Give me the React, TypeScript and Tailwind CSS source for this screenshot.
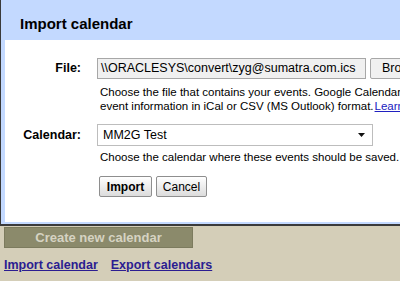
export default function App() {
  return (
    <div className="w-[400px] h-[281px] overflow-hidden bg-[#d4ceb8] font-['Liberation_Sans',Arial,sans-serif] text-black">
      {/* dialog, cut off at the right edge */}
      <div className="w-[430px] border-l border-b-2 border-[#3a3a3a]">
        <div className="border-l-4 border-b-2 border-[#c3d9ff]">
          <div className="h-[40px] bg-[#c3d9ff] pl-[15px] pt-[15px]">
            <h1 className="text-[15px] leading-[17px] font-bold">Import calendar</h1>
          </div>

          <div className="h-[182px] bg-white pt-[18px]">
            <div className="grid grid-cols-[76px_1fr] gap-x-[16px]">
              {/* File row */}
              <div className="h-[21px] flex items-center justify-end text-[12.5px] font-bold">File:</div>
              <div className="flex gap-[4px]">
                <div className="w-[269px] h-[21px] flex items-center pl-[3px] bg-[#f0f0f0] border border-[#a7a7a7] text-[12.5px] whitespace-nowrap overflow-hidden">
                  \\ORACLESYS\convert\zyg@sumatra.com.ics
                </div>
                <div className="w-[70px] h-[21px] flex items-center pl-[11px] bg-[#f0f0f0] border border-[#a7a7a7] rounded-[2px] text-[12.5px]">
                  Browse...
                </div>
              </div>

              <div />
              <div className="pl-[3px] pt-[6px] text-[11.5px] leading-[14px] whitespace-nowrap">
                <div>Choose the file that contains your events. Google Calendar can import</div>
                <div>
                  event information in iCal or CSV (MS Outlook) format.
                  <span className="ml-[1px] text-[#2020c0] underline">Learn more</span>
                </div>
              </div>

              {/* Calendar row */}
              <div className="mt-[11px] h-[22px] flex items-center justify-end text-[12.5px] font-bold">Calendar:</div>
              <div className="mt-[11px] w-[276px] h-[22px] flex items-center justify-between pl-[5px] pr-[7px] bg-white border border-[#bdbdbd] text-[12.5px]">
                <span>MM2G Test</span>
                <svg width="7" height="4" viewBox="0 0 7 4">
                  <path d="M0 0H7L3.5 4Z" fill="#111" />
                </svg>
              </div>

              <div />
              <div className="pl-[3px] pt-[4px] text-[11.5px] leading-[14px] whitespace-nowrap">
                Choose the calendar where these events should be saved.
              </div>

              <div />
              <div className="mt-[12px] pl-[2px] flex gap-[4px]">
                <div className="w-[53px] h-[21px] flex items-center justify-center rounded-[2px] border border-[#8e8e8e] bg-gradient-to-b from-white to-[#dcdcdc] text-[12px] font-bold">
                  Import
                </div>
                <div className="w-[51px] h-[21px] flex items-center justify-center rounded-[2px] border border-[#8e8e8e] bg-gradient-to-b from-white to-[#dcdcdc] text-[12px]">
                  Cancel
                </div>
              </div>
            </div>
          </div>
        </div>
      </div>

      <div className="pl-[4px] pt-[1px]">
        <div className="w-[189px] h-[21px] flex items-center justify-center bg-[#8b8a6b] border border-[#7c7b5e] text-[13px] font-bold text-[#d6d3c2]">
          Create new calendar
        </div>
        <div className="mt-[8px] flex gap-[13px] text-[12.5px] font-bold text-[#2b1d91] underline">
          <span>Import calendar</span>
          <span>Export calendars</span>
        </div>
      </div>
    </div>
  );
}
